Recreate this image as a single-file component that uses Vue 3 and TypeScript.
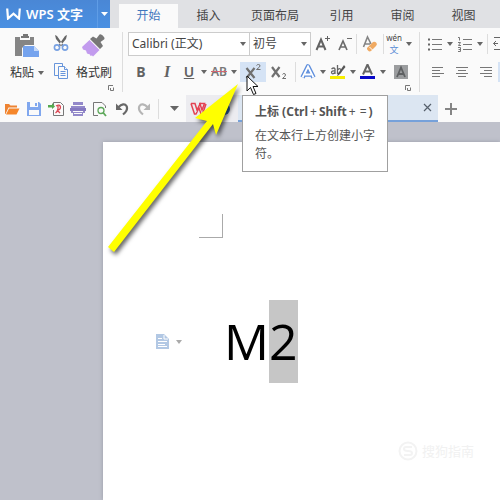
<script setup lang="ts">
import { ref } from 'vue'

const menuTabs: string[] = ['开始', '插入', '页面布局', '引用', '审阅', '视图']
const activeTab = ref('开始')
const fontName = ref('Calibri (正文)')
const fontSize = ref('初号')
</script>

<template>
  <div class="app">
    <header class="titlebar">
      <button class="brand" type="button">
        <svg class="brand-logo" width="15" height="12" viewBox="0 0 15 12"><path d="M1.200 0.500L2 10.500L7.500 5.600L13 10.500L13.800 0.500" fill="none" stroke="#fff" stroke-width="2.200" /></svg>
        <span class="brand-name">WPS 文字</span>
        <span class="brand-drop"><svg width="7" height="4" viewBox="0 0 7 4"><path d="M0 0H7L3.500 4Z" fill="#fff" /></svg></span>
      </button>
      <nav class="tabs">
        <button
          v-for="tab in menuTabs"
          :key="tab"
          type="button"
          class="tab"
          :class="{ active: tab === activeTab, long: tab.length > 2 }"
          @click="activeTab = tab"
        >{{ tab }}</button>
      </nav>
    </header>

    <section class="ribbon">
      <div class="group">
        <div class="clip">
          <button class="big paste" type="button">
            <svg width="26" height="24" viewBox="0 0 26 24">
              <path d="M1 3H6V6H16V3H20V11H11L8 14V22H1Z" fill="#858585" />
              <path d="M7 4V2H9V0H14V2H15V4Z" fill="#777" />
              <path d="M9 12H20L25 17V23H9Z" fill="#75a3ee" />
              <path d="M20 12V17H25Z" fill="#c4d9fa" />
            </svg>
            <span class="label">粘贴<svg class="caret" width="6" height="4" viewBox="0 0 6 4"><path d="M0 0H6L3 4Z" /></svg></span>
          </button>
          <div class="small-col">
            <button class="icon-btn" type="button" aria-label="剪切">
              <svg width="16" height="18" viewBox="0 0 16 18">
                <path d="M2 1L4 2L11 12L9.500 13L3 5Z M14 1L12 2L5 12L6.500 13L13 5Z" fill="#666" />
                <circle cx="4" cy="13.500" r="2.600" fill="none" stroke="#78a1e2" stroke-width="1.600" />
                <circle cx="12" cy="13.500" r="2.600" fill="none" stroke="#78a1e2" stroke-width="1.600" />
              </svg>
            </button>
            <button class="icon-btn" type="button" aria-label="复制">
              <svg width="16" height="18" viewBox="0 0 16 18" fill="#fafafa" stroke="#6795db">
                <path d="M1.500 1.500H9.500V13.500H1.500Z" />
                <path d="M5.500 4.500H11.500L14.500 7.500V16.500H5.500Z" />
                <path d="M11.500 4.500V7.500H14.500M7.500 9.500H12.500M7.500 11.500H12.500M7.500 13.500H12.500" />
              </svg>
            </button>
          </div>
          <button class="big brush" type="button">
            <svg width="26" height="24" viewBox="0 0 26 24">
              <path d="M18.500 0.500Q20.500 -0.500 23 3Q24 4.500 23 5.500L19.500 8L22 12L19 15L9 5L12 2.500L15.500 4.500Z" fill="#777" />
              <path d="M8.500 6L18.500 16L12 22.500Q11 21 9.500 22L9 20.500L6 19.500L5 16.500L2 15.500L1 13Z" fill="#c29bee" />
            </svg>
            <span class="label">格式刷</span>
          </button>
        </div>
        <button class="launcher" type="button" aria-label="剪贴板"><svg width="6" height="6" viewBox="0 0 6 6"><path d="M0.500 5V0.500H5M2.500 3V5.500H5.500V2.500" fill="none" stroke="#777" /></svg></button>
      </div>

      <div class="group font-group">
        <div class="row first">
          <label class="pick wide">
            <select v-model="fontName" aria-label="字体"><option>Calibri (正文)</option></select>
            <svg class="caret" width="6" height="4" viewBox="0 0 6 4"><path d="M0 0H6L3 4Z" /></svg>
          </label>
          <label class="pick">
            <select v-model="fontSize" aria-label="字号"><option>初号</option></select>
            <svg class="caret" width="6" height="4" viewBox="0 0 6 4"><path d="M0 0H6L3 4Z" /></svg>
          </label>
          <button class="tool t24" type="button" aria-label="增大字号">
            <svg width="16" height="16" viewBox="0 0 16 16" fill="none" stroke="#626262"><path d="M1.500 14L6 3.500L10.500 14M3.500 10.500H8.500" stroke-width="2" /><path d="M12.500 0V5M10 2.500H15" /></svg>
          </button>
          <button class="tool t20" type="button" aria-label="减小字号">
            <svg width="16" height="16" viewBox="0 0 16 16" fill="none" stroke="#6c6c6c"><path d="M2 14L6 5L10 14M3.500 11H8.500" stroke-width="1.700" /><path d="M10 2.500H15" /></svg>
          </button>
          <i class="sep"></i>
          <button class="tool t24" type="button" aria-label="清除格式">
            <svg width="16" height="18" viewBox="0 0 16 18"><path d="M1.500 12L5.500 2L9 9M3 9H8" fill="none" stroke="#858585" stroke-width="1.600" /><path d="M5 13L11 7Q13 6 14.500 8Q15.500 9.500 14 11L9 16Q7.500 17 6 15.500Q4.500 14 5 13Z" fill="#f0aa62" /><path d="M7.500 12L10.500 15" stroke="#fff" /></svg>
          </button>
          <i class="sep"></i>
          <button class="tool split" type="button">
            <span class="face pinyin"><small>wén</small><b>文</b></span>
            <svg class="caret" width="6" height="4" viewBox="0 0 6 4"><path d="M0 0H6L3 4Z" /></svg>
          </button>
        </div>
        <div class="row">
          <button class="tool t26 glyph" type="button">B</button>
          <button class="tool t26 glyph italic" type="button">I</button>
          <button class="tool split" type="button"><span class="face glyph under">U</span><svg class="caret" width="6" height="4" viewBox="0 0 6 4"><path d="M0 0H6L3 4Z" /></svg></button>
          <button class="tool split" type="button"><span class="face strike">AB</span><svg class="caret" width="6" height="4" viewBox="0 0 6 4"><path d="M0 0H6L3 4Z" /></svg></button>
          <button class="tool t26 on" type="button" aria-label="上标">
            <svg width="18" height="18" viewBox="0 0 18 18" fill="none" stroke="#707070"><path d="M2.500 5L10.500 15M10.500 5L2.500 15" stroke-width="2.200" /><path d="M12.500 2.500Q13 1.500 14.500 1.500Q16 1.500 16 3Q16 4 12.500 6.500H16.500" /></svg>
          </button>
          <button class="tool t26" type="button" aria-label="下标">
            <svg width="18" height="18" viewBox="0 0 18 18" fill="none" stroke="#707070"><path d="M2 4L9.500 14M9.500 4L2 14" stroke-width="2.200" /><path d="M12.500 11.500Q13 10.500 14 10.500Q15.500 10.500 15.500 12Q15.500 13 12.500 15.500H16" /></svg>
          </button>
          <i class="sep"></i>
          <button class="tool split" type="button" aria-label="文字效果">
            <span class="face"><svg width="16" height="16" viewBox="0 0 16 16"><path d="M2.500 13.500L8 2.500L13.500 13.500M5 10.500H11" fill="none" stroke="#5f8fdd" stroke-width="4.600" stroke-linejoin="round" /><path d="M2.500 13.500L8 2.500L13.500 13.500M5 10.500H11" fill="none" stroke="#fff" stroke-width="1.800" /></svg></span>
            <svg class="caret" width="6" height="4" viewBox="0 0 6 4"><path d="M0 0H6L3 4Z" /></svg>
          </button>
          <button class="tool split" type="button" aria-label="突出显示">
            <span class="face"><svg width="16" height="16" viewBox="0 0 16 16"><path d="M0 12H15V15H0Z" fill="#f7ee00" /><path d="M1.500 5Q4 3 5 5V10M5 7Q1.500 6.500 1.500 8.700Q2.500 11 5 8.500M7.500 1V10M7.500 6Q11 3 11 7Q10.500 10.500 7.500 9" fill="none" stroke="#666" stroke-width="1.300" /><path d="M14 1L15.500 3L9 11L7 12L8 9.500Z" fill="#555" /></svg></span>
            <svg class="caret" width="6" height="4" viewBox="0 0 6 4"><path d="M0 0H6L3 4Z" /></svg>
          </button>
          <button class="tool split" type="button" aria-label="字体颜色">
            <span class="face"><svg width="16" height="16" viewBox="0 0 16 16"><path d="M0 12H15V15H0Z" fill="#0808c8" /><path d="M3 10.500L7.500 0.500L12 10.500M5 7.500H10" fill="none" stroke="#666" stroke-width="2" /></svg></span>
            <svg class="caret" width="6" height="4" viewBox="0 0 6 4"><path d="M0 0H6L3 4Z" /></svg>
          </button>
          <button class="tool t24" type="button" aria-label="字符底纹">
            <svg width="14" height="14" viewBox="0 0 14 14"><path d="M0 0H14V14H0Z" fill="#9b9d9f" /><path d="M3 12L7 2.500L11 12M4.500 9H9.500" fill="none" stroke="#5e6062" stroke-width="1.800" /></svg>
          </button>
        </div>
        <button class="launcher" type="button" aria-label="字体设置"><svg width="6" height="6" viewBox="0 0 6 6"><path d="M0.500 5V0.500H5M2.500 3V5.500H5.500V2.500" fill="none" stroke="#777" /></svg></button>
      </div>

      <div class="group para-group">
        <div class="row first">
          <button class="tool split" type="button" aria-label="项目符号">
            <span class="face"><svg width="16" height="14" viewBox="0 0 16 14"><path d="M5 2.500H15M5 7.500H15M5 12.500H15" stroke="#777" /><path d="M1 1.500H3V3.500H1ZM1 6.500H3V8.500H1ZM1 11.500H3V13.500H1Z" fill="#666" /></svg></span>
            <svg class="caret" width="6" height="4" viewBox="0 0 6 4"><path d="M0 0H6L3 4Z" /></svg>
          </button>
          <button class="tool split" type="button" aria-label="编号">
            <span class="face"><svg width="16" height="16" viewBox="0 0 16 16" fill="none" stroke="#777"><path d="M6 3.500H15M6 8.500H15M6 13.500H15" /><path d="M1 1.500H2.500V4.500M1 6.500H3.500L1.500 9.500H4M1 11.500H3.500V15.500H1M1.500 13.500H3.500" /></svg></span>
            <svg class="caret" width="6" height="4" viewBox="0 0 6 4"><path d="M0 0H6L3 4Z" /></svg>
          </button>
          <i class="sep"></i>
          <button class="tool t24" type="button" aria-label="减少缩进">
            <svg width="16" height="16" viewBox="0 0 16 16" fill="none" stroke="#666"><path d="M1 1.500H15M7 5.500H15M7 9.500H15M1 13.500H15M0.500 7.500H5M3 5L0.500 7.500L3 10" /></svg>
          </button>
        </div>
        <div class="row">
          <button class="tool t24" type="button" aria-label="左对齐"><svg width="14" height="12" viewBox="0 0 14 12"><path d="M1 1.500H12M1 4.500H9M1 7.500H13M1 10.500H9" stroke="#777" /></svg></button>
          <button class="tool t24" type="button" aria-label="居中"><svg width="14" height="12" viewBox="0 0 14 12"><path d="M1 1.500H13M3 4.500H11M1 7.500H13M3 10.500H11" stroke="#777" /></svg></button>
          <button class="tool t24" type="button" aria-label="右对齐"><svg width="14" height="12" viewBox="0 0 14 12"><path d="M1 1.500H13M5 4.500H13M1 7.500H13M5 10.500H13" stroke="#777" /></svg></button>
          <button class="tool t24 on" type="button" aria-label="两端对齐"></button>
        </div>
      </div>
    </section>

    <section class="quickbar">
      <button class="q" type="button" aria-label="打开"><svg width="16" height="14" viewBox="0 0 16 14"><path d="M1 12V2H5L6.500 3.500H13V5.500H4.500L1.500 12Z" fill="#ee8332" /><path d="M5 6.500H15.500L12.500 12.500H2Z" fill="#f5862a" /></svg></button>
      <button class="q" type="button" aria-label="保存"><svg width="14" height="14" viewBox="0 0 14 14"><path d="M0 0H12L14 2V14H0Z" fill="#80a7ee" /><path d="M3 0H11V5H3ZM2 8H12V13H2Z" fill="#fafafa" /><path d="M8 1H10V4H8Z" fill="#80a7ee" /></svg></button>
      <button class="q" type="button" aria-label="输出为PDF"><svg width="17" height="16" viewBox="0 0 17 16" fill="none"><path d="M5.500 4V1.500H12.500L15.500 4.500V14.500H5.500V9" stroke="#777" /><path d="M8 5Q12 3 12.500 6Q12.500 9 9 9M10 5Q10.500 10 7.500 12M9 9L12 12" stroke="#dc4552" stroke-width="1.300" /><path d="M0 4H4V2L7 5.500L4 8V6.500H0Z" fill="#54a94f" /></svg></button>
      <button class="q" type="button" aria-label="打印"><svg width="16" height="14" viewBox="0 0 16 14"><path d="M3 0H13V3H3ZM1 4H15V11H13V9H3V11H1ZM3 10H13V14H3Z" fill="#9389ca" /><path d="M4 11.500H12" stroke="#fafafa" /><path d="M0 6H16V9H0Z" fill="#8579c1" /></svg></button>
      <button class="q" type="button" aria-label="打印预览"><svg width="16" height="16" viewBox="0 0 16 16" fill="none"><path d="M6 14.500H1.500V1.500H10L13.500 5V7" stroke="#777" /><circle cx="9" cy="9.500" r="3" stroke="#5ca759" stroke-width="1.300" /><path d="M11 11.500L14 15" stroke="#5ca759" stroke-width="1.800" /></svg></button>
      <button class="q" type="button" aria-label="撤销"><svg width="14" height="14" viewBox="0 0 14 14"><path d="M3 5.500Q9 0 11.500 4Q13.500 8 8 12.500" fill="none" stroke="#686868" stroke-width="2.200" /><path d="M1 1.500V8H7.500Z" fill="#686868" /></svg></button>
      <button class="q" type="button" aria-label="恢复"><svg width="14" height="14" viewBox="0 0 14 14"><path d="M11 5.500Q5 0 2.500 4Q0.500 8 6 12.500" fill="none" stroke="#b5b5b5" stroke-width="2.200" /><path d="M13 1.500V8H6.500Z" fill="#b5b5b5" /></svg></button>
      <i class="sep q-sep"></i>
      <button class="q more" type="button" aria-label="更多"><svg width="9" height="5" viewBox="0 0 9 5"><path d="M0 0H9L4.500 5Z" fill="#666" /></svg></button>
      <div class="doc-home">
        <svg width="17" height="14" viewBox="0 0 17 14"><path d="M1 1.500H5L7 8L10 2L12 8L14.500 1.500H9M1 1.500L4.500 12H6L9 6L11 12H12.500L16 2" fill="none" stroke="#e34252" stroke-width="1.500" /></svg>
        <svg width="14" height="14" viewBox="0 0 14 14"><circle cx="7" cy="7" r="6" fill="#2f68b5" /></svg>
      </div>
      <div class="doc-tab"><button type="button" aria-label="关闭"><svg width="9" height="9" viewBox="0 0 9 9"><path d="M1 1L8 8M8 1L1 8" stroke="#56606c" stroke-width="1.200" /></svg></button></div>
      <button class="q new" type="button" aria-label="新建"><svg width="12" height="12" viewBox="0 0 12 12"><path d="M6 0V12M0 6H12" stroke="#858585" stroke-width="2" /></svg></button>
    </section>

    <main class="workspace">
      <article class="page">
        <div class="corner"></div>
        <div class="line">
          <button class="para-tag" type="button" aria-label="段落布局">
            <svg width="14" height="15" viewBox="0 0 14 15"><path d="M0 0H8L13 5V15H0Z" fill="#b2c8e4" /><path d="M8 1V5H12M2 4.500H6M2 7.500H11M2 10.500H9M2 12.500H11" fill="none" stroke="#fff" /></svg>
            <svg width="6" height="4" viewBox="0 0 6 4"><path d="M0 0H6L3 4Z" fill="#aaa" /></svg>
          </button>
          <p class="text">M<mark>2</mark></p>
        </div>
      </article>
    </main>

    <div class="tooltip" role="tooltip">
      <strong>上标 (Ctrl<span>+</span>Shift<span>+</span><span>=</span>)</strong>
      <p>在文本行上方创建小字符。</p>
    </div>

    <svg class="pointer-arrow" width="150" height="180" viewBox="0 0 150 180">
      <path d="M137 4L94 38L106 41L7 167L13 172L112 44L115 55Z" fill="#ff0" />
    </svg>
    <svg class="cursor" width="14" height="21" viewBox="0 0 14 21"><path d="M1 1V16L4.500 12.500L7.500 19.500L10 18.500L7 11.500H12Z" fill="#fff" stroke="#111" /></svg>

    <div class="watermark">
      <svg width="20" height="20" viewBox="0 0 20 20" fill="none" stroke="#f3f3f3" stroke-width="2"><circle cx="10" cy="10" r="8.500" /><path d="M14 6H8Q6 6 6 8Q6 10 10 10Q14 10 14 12Q14 14 12 14H6" /></svg>
      <span>搜狗指南</span>
    </div>
  </div>
</template>

<style>
body { margin: 0; }
</style>

<style scoped>
* { box-sizing: border-box; }
.app {
  position: relative;
  display: flex;
  flex-direction: column;
  min-height: 100vh;
  overflow: hidden;
  background: #bfc1cb;
  color: #444;
  font: 12px/18px "Noto Sans", "Noto Sans CJK SC", sans-serif;
}
button {
  display: flex;
  align-items: center;
  justify-content: center;
  flex: none;
  padding: 0;
  border: 0;
  background: none;
  color: inherit;
  font: inherit;
}
svg { flex: none; }
.caret { fill: #666; }

.titlebar { display: flex; height: 28px; background: #e0e1e4; }
.brand {
  align-self: stretch;
  width: 110px;
  padding-left: 6px;
  justify-content: flex-start;
  gap: 5px;
  background: linear-gradient(#4a87d5, #4a90e2);
  color: #fff;
  white-space: nowrap;
}
.brand-name { flex: 1; font-size: 13px; font-weight: 600; text-align: left; }
.brand-drop {
  display: flex;
  align-items: center;
  justify-content: center;
  align-self: stretch;
  width: 13px;
  border-left: 1px solid #5f9de6;
}
.tabs { display: flex; flex: 1; padding: 4px 0 0 9px; }
.tab { width: 61px; white-space: nowrap; }
.tab.long { width: 72px; }
.tab.active { width: 59px; background: #fafafa; color: #3f76bd; }

.ribbon { display: flex; padding-top: 4px; background: #fafafa; overflow: hidden; }
.group { display: flex; flex-direction: column; flex: none; height: 60px; border-right: 1px solid #ddd; }
.clip { display: flex; width: 122px; height: 50px; }
.big { flex-direction: column; gap: 6px; width: 46px; }
.brush { width: 38px; }
.big > svg { margin-top: 2px; }
.paste { padding-left: 8px; }
.label { display: flex; align-items: center; gap: 4px; height: 18px; color: #333; white-space: nowrap; }
.small-col { display: flex; flex-direction: column; gap: 6px; width: 29px; }
.icon-btn { width: 29px; height: 22px; }
.launcher { align-self: flex-end; width: 8px; height: 8px; margin: 2px 7px 0 0; }
.font-group { width: 297px; padding-left: 5px; }
.para-group { padding-left: 6px; border: 0; }
.row { display: flex; align-items: center; height: 20px; }
.row.first { height: 24px; margin-bottom: 6px; }
.pick { display: grid; width: 62px; height: 24px; margin-left: -1px; }
.pick.wide { width: 122px; margin-left: 0; }
.pick select {
  grid-area: 1 / 1;
  width: 100%;
  padding: 0 3px;
  appearance: none;
  border: 1px solid #ccc;
  border-radius: 0;
  background: #fff;
  color: #444;
  font: inherit;
}
.pick .caret { grid-area: 1 / 1; align-self: center; justify-self: end; margin-right: 4px; pointer-events: none; }
.tool { height: 20px; }
.t20 { width: 20px; }
.t24 { width: 24px; }
.t26 { width: 26px; }
.on { background: #d5e3f5; }
.split { width: 30px; justify-content: flex-start; }
.split .caret { margin-left: 3px; }
.face { display: flex; justify-content: center; width: 18px; flex: none; }
.sep { flex: none; width: 1px; height: 20px; margin: 0 3px; background: #ddd; }
.first .sep { margin: 0 1px; }
.glyph { color: #626262; font-size: 14px; font-weight: 700; }
.italic { font-family: "Liberation Serif", serif; font-size: 16px; font-style: italic; }
.under { text-decoration: underline; font-weight: 600; }
.strike { color: #777; font-size: 12px; font-weight: 600; text-decoration: line-through #d66572; }
.pinyin { flex-direction: column; align-items: center; }
.pinyin small { font-size: 8px; line-height: 11px; }
.pinyin b { color: #5c8fd6; font-size: 9px; font-weight: 400; line-height: 13px; }

.quickbar { display: flex; align-items: center; height: 30px; padding: 3px 0 0 1px; background: #fafafa; overflow: hidden; }
.q { flex: none; width: 22px; height: 26px; }
.q-sep { margin: 0 3px; }
.more { margin: 0 1px; }
.doc-home { display: flex; align-items: center; gap: 10px; flex: none; align-self: stretch; width: 52px; padding-left: 4px; background: #ececf0; }
.doc-tab {
  display: flex;
  align-items: center;
  justify-content: flex-end;
  flex: none;
  align-self: stretch;
  width: 200px;
  margin-right: 2px;
  padding-right: 6px;
  border-bottom: 2px solid #76a1da;
  background: #dce6f2;
}

.workspace { display: flex; flex: 1; padding: 20px 0 0 103px; }
.page { flex: 1; padding-top: 72px; background: #fff; box-shadow: 0 0 4px #989ba7; }
.corner { width: 24px; height: 24px; margin-left: 96px; border: solid #aaa; border-width: 0 1px 1px 0; }
.line { display: flex; align-items: center; margin-top: 62px; padding-left: 53px; }
.para-tag { justify-content: flex-start; gap: 6px; width: 68px; }
.text { display: flex; margin: 0; color: #000; font: 50px/83px "Open Sans", sans-serif; }
.text mark { background: #c6c6c6; color: #000; }

.tooltip {
  position: absolute;
  top: 95px;
  left: 242px;
  width: 146px;
  padding: 7px 9px 8px 12px;
  border: 1px solid #a0a0a0;
  background: #fff;
  color: #555;
}
.tooltip strong { display: block; white-space: nowrap; }
.tooltip strong span { margin: 0 2px; font-weight: 400; }
.tooltip p { margin: 6px 0 0; }
.pointer-arrow { position: absolute; top: 80px; left: 101px; filter: drop-shadow(2px 3px 2px rgba(0, 0, 0, 0.6)); }
.cursor { position: absolute; top: 75px; left: 246px; }
.watermark { position: absolute; top: 441px; left: 398px; display: flex; align-items: center; gap: 4px; color: #f1f1f1; font-size: 13px; }
</style>
